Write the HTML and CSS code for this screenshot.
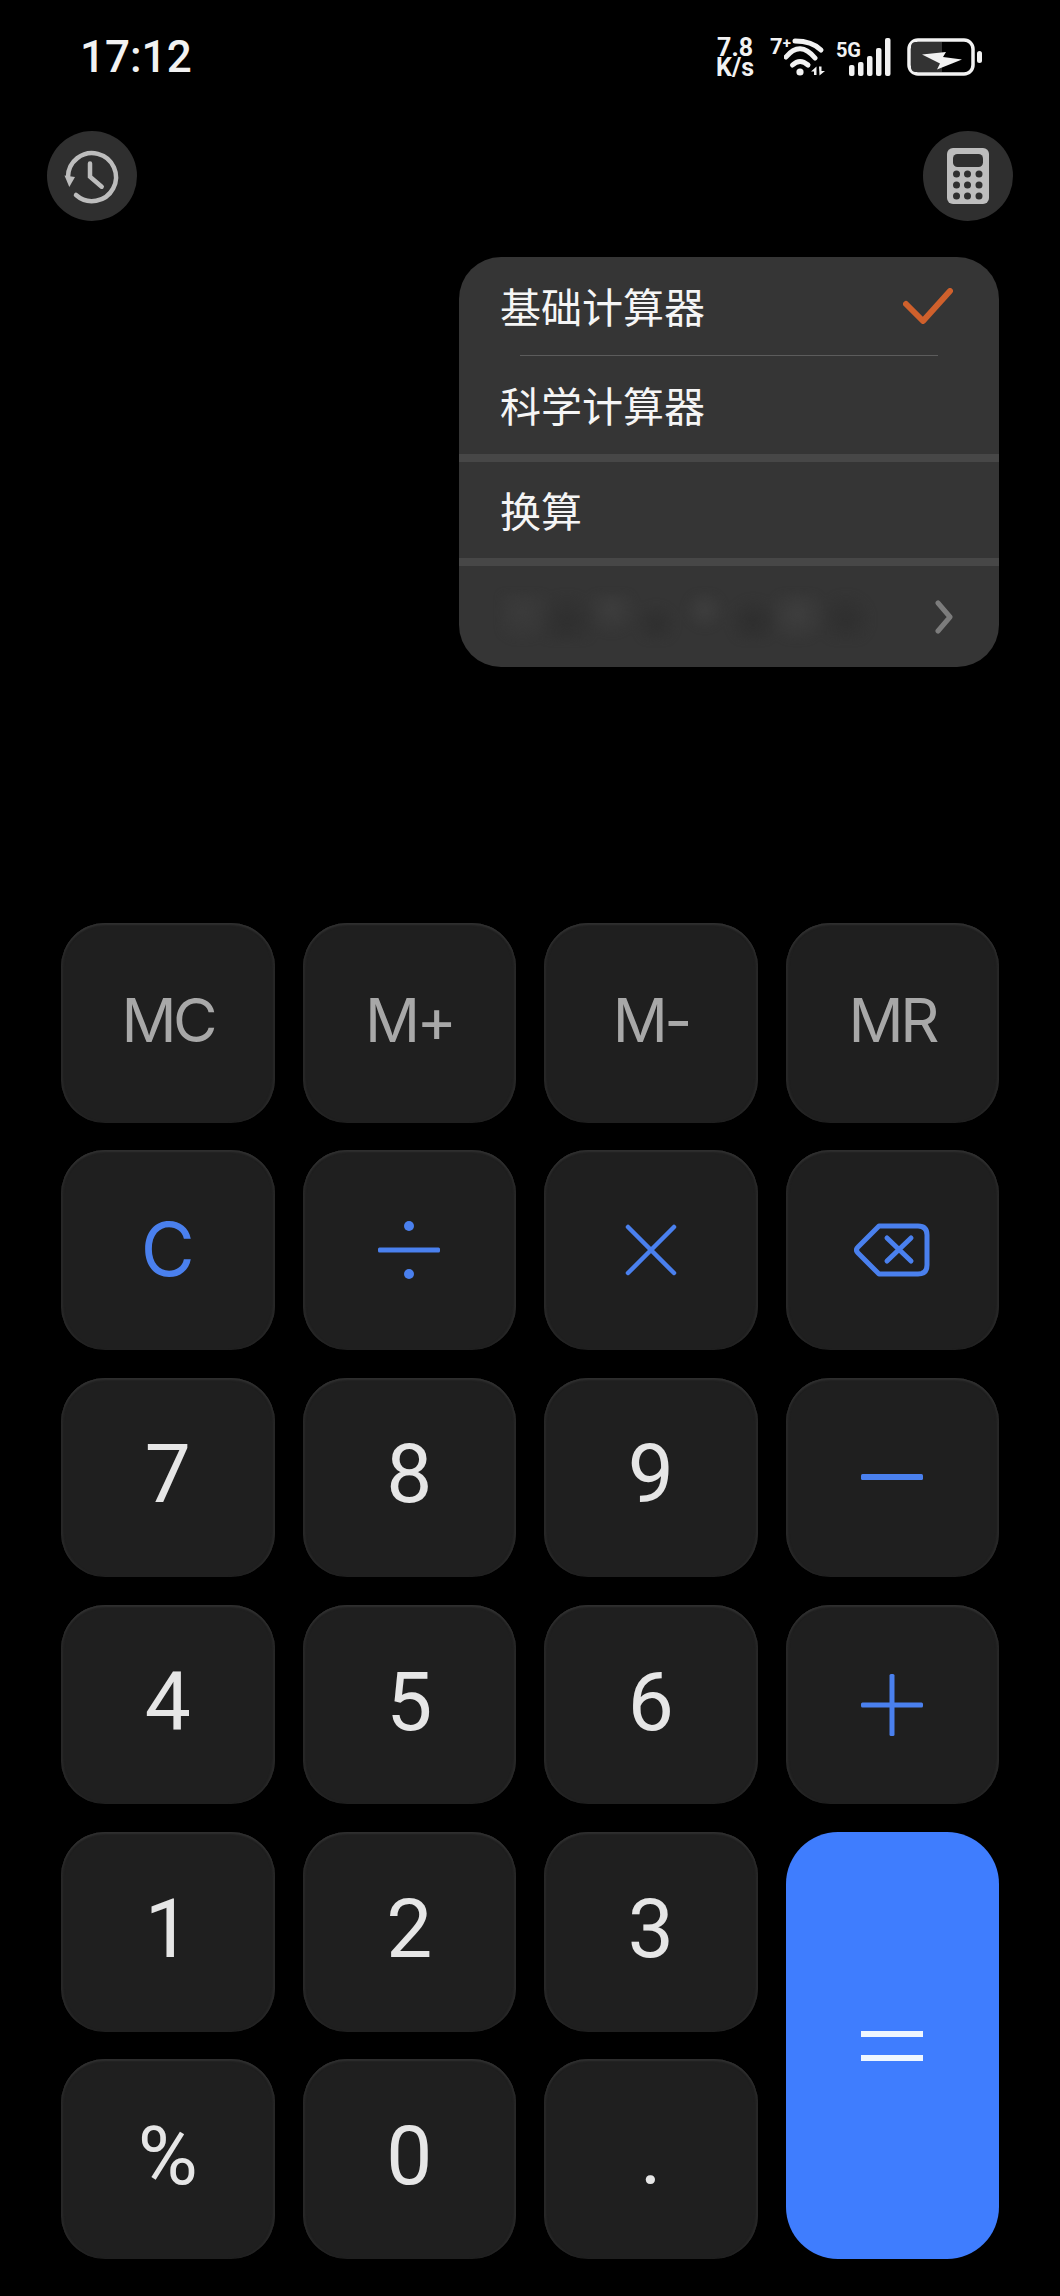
FILE: index.html
```html
<!DOCTYPE html>
<html lang="zh-CN">
<head>
    <meta charset="UTF-8">
    <meta name="viewport" content="width=device-width, initial-scale=1.0">
    <title>计算器</title>
    <link rel="stylesheet" href="styles.css">
</head>
<body>
    <div id="app">
        <div class="status">
            <span class="time">17:12</span>
            <div class="status-icons">
                <div class="speed">7.8<br>K/s</div>
                <span class="wifi-gen">7<sup>+</sup></span>
                <svg class="wifi" width="42" height="38" viewBox="0 0 42 38">
                    <g fill="none" stroke="#f2f2f2" stroke-width="5" stroke-linecap="round">
                        <path d="M11 3 Q28 3 37 12"/>
                        <path d="M2 19 Q16 2 31 20"/>
                        <path d="M8.500 27 Q16 20 24 27"/>
                    </g>
                    <circle cx="16" cy="34" r="3.600" fill="#f2f2f2"/>
                    <path d="M27 33.500 L32.500 28.500 V37 H30 V33.500Z M35 28.500 H37.500 V33 H41 L35.500 37.500Z" fill="#f2f2f2"/>
                </svg>
                <span class="net-gen">5G</span>
                <svg class="signal" width="43" height="38" viewBox="0 0 43 38" fill="#f2f2f2">
                    <rect x="0" y="27" width="5.500" height="11" rx="2"/>
                    <rect x="9" y="24" width="5.500" height="14" rx="2"/>
                    <rect x="18" y="18" width="5.500" height="20" rx="2"/>
                    <rect x="27" y="10" width="5.500" height="28" rx="2"/>
                    <rect x="36" y="0" width="5.500" height="38" rx="2"/>
                </svg>
                <svg class="battery" width="76" height="38" viewBox="0 0 76 38">
                    <rect x="2" y="2" width="64" height="34" rx="9" fill="none" stroke="#f2f2f2" stroke-width="3.500"/>
                    <path d="M9 4 H35 V34 H9 Q4 34 4 29 V9 Q4 4 9 4Z" fill="#333"/>
                    <path d="M15 16.500 L39 14 L36 19 L55 21.500 L30 31.500 L33 25.500Z" fill="#f2f2f2"/>
                    <rect x="70" y="13" width="5" height="12" rx="2.500" fill="#f2f2f2"/>
                </svg>
            </div>
        </div>

        <div class="toolbar">
            <div class="round-btn">
                <svg width="60" height="60" viewBox="0 0 60 60" fill="none" stroke="#bdbdbd" stroke-width="4.500">
                    <path d="M6 31 A24 24 0 1 1 14 49" stroke-linecap="round"/>
                    <path d="M28 17.500 V30.700 L39.700 40.700" stroke-linecap="round"/>
                    <path d="M2.500 29.500 L13 31 L7.300 41Z" fill="#bdbdbd" stroke="none"/>
                </svg>
            </div>
            <div class="round-btn">
                <svg width="42" height="56" viewBox="0 0 42 56">
                    <rect x="0" y="0" width="42" height="56" rx="6" fill="#bdbdbd"/>
                    <rect x="6" y="6" width="30" height="13" rx="4.500" fill="#2f2f2f"/>
                    <g fill="#2f2f2f">
                        <circle cx="9.500" cy="26" r="3.500"/><circle cx="20.500" cy="26" r="3.500"/><circle cx="32" cy="26" r="3.500"/>
                        <circle cx="9.500" cy="37" r="3.500"/><circle cx="20.500" cy="37" r="3.500"/><circle cx="32" cy="37" r="3.500"/>
                        <circle cx="9.500" cy="48" r="3.500"/><circle cx="20.500" cy="48" r="3.500"/><circle cx="32" cy="48" r="3.500"/>
                    </g>
                </svg>
            </div>
        </div>

        <div class="menu">
            <div class="menu-row first">
                <span>基础计算器</span>
                <svg width="50" height="36" viewBox="0 0 50 36" fill="none" stroke="#cf602c" stroke-width="6" stroke-linecap="round" stroke-linejoin="round">
                    <path d="M3 16 L20 33 L47 3"/>
                </svg>
            </div>
            <div class="menu-line"></div>
            <div class="menu-row second"><span>科学计算器</span></div>
            <div class="menu-bar"></div>
            <div class="menu-row third"><span>换算</span></div>
            <div class="menu-bar"></div>
            <div class="menu-row last">
                <div class="smudge"></div>
                <svg class="chevron" width="18" height="34" viewBox="0 0 18 34" fill="none" stroke="#7c7c7c" stroke-width="5" stroke-linecap="round" stroke-linejoin="round">
                    <path d="M3 3 L15 17 L3 31"/>
                </svg>
            </div>
        </div>

        <div class="keypad">
            <div class="key mem">MC</div>
            <div class="key mem">M+</div>
            <div class="key mem">M-</div>
            <div class="key mem">MR</div>

            <div class="key op-text">C</div>
            <div class="key">
                <svg width="62" height="58" viewBox="0 0 62 58" fill="#4a80ee">
                    <circle cx="31" cy="5" r="5"/>
                    <rect x="0" y="26.500" width="62" height="5" rx="1.500"/>
                    <circle cx="31" cy="53" r="5"/>
                </svg>
            </div>
            <div class="key">
                <svg width="52" height="52" viewBox="0 0 52 52" stroke="#4a80ee" stroke-width="4.500" stroke-linecap="round">
                    <path d="M3 3 L49 49 M49 3 L3 49"/>
                </svg>
            </div>
            <div class="key">
                <svg width="76" height="54" viewBox="0 0 76 54" fill="none" stroke="#4a80ee" stroke-width="5" stroke-linejoin="round" stroke-linecap="round">
                    <path d="M25 3 H64 Q73 3 73 12 V42 Q73 51 64 51 H25 L4 30 Q1 27 4 24Z"/>
                    <path d="M33 15 L57 38 M57 15 L33 38"/>
                </svg>
            </div>

            <div class="key num">7</div>
            <div class="key num">8</div>
            <div class="key num">9</div>
            <div class="key">
                <svg width="62" height="6" viewBox="0 0 62 6"><rect width="62" height="6" rx="1.500" fill="#4a80ee"/></svg>
            </div>

            <div class="key num">4</div>
            <div class="key num">5</div>
            <div class="key num">6</div>
            <div class="key">
                <svg width="62" height="62" viewBox="0 0 62 62" fill="#4a80ee">
                    <rect x="0" y="28.500" width="62" height="5" rx="1.500"/>
                    <rect x="28.500" y="0" width="5" height="62" rx="1.500"/>
                </svg>
            </div>

            <div class="key num">1</div>
            <div class="key num">2</div>
            <div class="key num">3</div>
            <div class="key equals">
                <svg width="62" height="30" viewBox="0 0 62 30" fill="#eef6ff">
                    <rect x="0" y="0" width="62" height="6"/>
                    <rect x="0" y="24" width="62" height="6"/>
                </svg>
            </div>

            <div class="key num">%</div>
            <div class="key num">0</div>
            <div class="key num">.</div>
        </div>
    </div>
</body>
</html>
```

FILE: styles.css
```css
* {
    box-sizing: border-box;
}
body {
    margin: 0;
    background: #000;
    font-family: "Roboto", "Noto Sans CJK SC", sans-serif;
}
#app {
    position: relative;
    width: 1060px;
    height: 2296px;
    display: flex;
    flex-direction: column;
    overflow: hidden;
}

/* status bar */
.status {
    display: flex;
    justify-content: space-between;
    align-items: center;
    height: 38px;
    margin-top: 38px;
    padding: 0 77px 0 80px;
    color: #f2f2f2;
}
.time {
    font-size: 44px;
    font-weight: 500;
    line-height: 1;
}
.status-icons {
    display: flex;
    align-items: flex-start;
    height: 38px;
}
.speed {
    width: 40px;
    text-align: center;
    font-size: 25px;
    font-weight: 700;
    line-height: 20px;
}
.wifi-gen {
    margin-left: 15px;
    font-size: 22px;
    font-weight: 700;
    line-height: 18px;
}
.wifi-gen sup {
    font-size: 15px;
    line-height: 0;
    vertical-align: 6px;
}
.wifi {
    margin-left: -7px;
}
.net-gen {
    margin: 3px 0 0 10px;
    font-size: 20px;
    font-weight: 700;
    line-height: 18px;
}
.signal {
    margin-left: -12px;
}
.battery {
    margin-left: 15px;
}

/* round buttons */
.toolbar {
    display: flex;
    justify-content: space-between;
    margin-top: 55px;
    padding: 0 47px;
}
.round-btn {
    width: 90px;
    height: 90px;
    border-radius: 50%;
    background: #2f2f2f;
    display: flex;
    align-items: center;
    justify-content: center;
}

/* popup menu */
.menu {
    position: absolute;
    left: 459px;
    top: 257px;
    width: 540px;
    border-radius: 42px;
    background: #353535;
    color: #f5f5f5;
    font-size: 41px;
    overflow: hidden;
}
.menu-row {
    display: flex;
    align-items: center;
    justify-content: space-between;
    padding: 0 46px 0 41px;
}
.menu-row span {
    padding-bottom: 3px;
}
.menu-row.first {
    height: 98px;
}
.menu-row.second {
    height: 98px;
}
.menu-row.third {
    height: 96px;
}
.menu-row.last {
    height: 101px;
}
.menu-line {
    height: 1px;
    margin: 0 61px;
    background: #5c5c5c;
}
.menu-bar {
    height: 8px;
    background: #474747;
}
.smudge {
    width: 372px;
    height: 48px;
    background:
        radial-gradient(circle at 6% 40%, #3b3b3b, transparent 9%),
        radial-gradient(circle at 18% 60%, #2f2f2f, transparent 10%),
        radial-gradient(circle at 30% 35%, #3d3d3d, transparent 10%),
        radial-gradient(circle at 42% 65%, #2f2f2f, transparent 10%),
        radial-gradient(circle at 55% 35%, #3e3e3e, transparent 10%),
        radial-gradient(circle at 68% 60%, #2e2e2e, transparent 10%),
        radial-gradient(circle at 80% 45%, #3e3e3e, transparent 10%),
        radial-gradient(circle at 93% 55%, #2f2f2f, transparent 8%);
    filter: blur(3px);
}

/* keys */
.keypad {
    display: grid;
    grid-template-columns: repeat(4, 1fr);
    grid-template-rows: repeat(6, 1fr);
    gap: 27.600px 28px;
    height: 1336px;
    margin-top: auto;
    margin-bottom: 37px;
    padding: 0 61px;
}
.key {
    display: flex;
    align-items: center;
    justify-content: center;
    border-radius: 44px;
    background: #1f1f1f;
    box-shadow: inset 0 3px 2px -1px #303030, inset 3px 0 2px -1px #292929, inset -3px 0 2px -1px #292929;
}
.num {
    padding-bottom: 6px;
    color: #e6e6e6;
    font-size: 82px;
    font-weight: 400;
}
.mem {
    padding-bottom: 5px;
    color: #a8a8a8;
    font-family: "Inter", sans-serif;
    font-size: 61px;
    font-weight: 400;
    letter-spacing: -3.500px;
}
.op-text {
    padding-bottom: 2px;
    color: #4a80ee;
    font-family: "Inter", sans-serif;
    font-size: 74px;
    font-weight: 400;
}
.equals {
    grid-column: 4;
    grid-row: 5 / span 2;
    border-radius: 52px;
    background: #3f7dfe;
    box-shadow: none;
}
```
